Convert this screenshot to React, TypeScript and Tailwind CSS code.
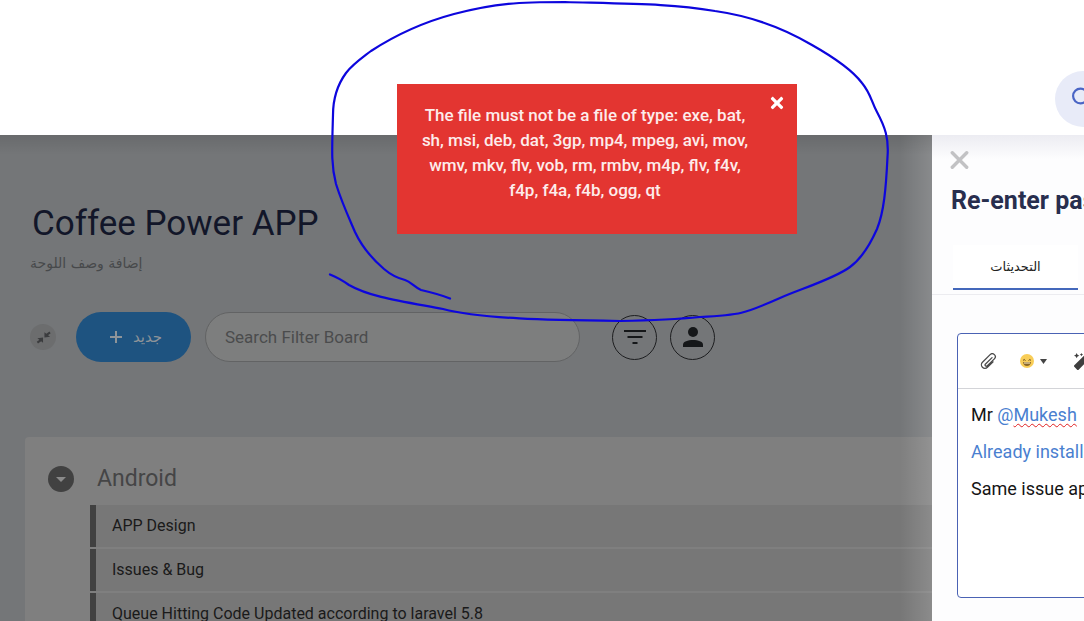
import React from "react";
import { FaMagic, FaTimes } from "react-icons/fa";

const tasks = ["APP Design", "Issues & Bug", "Queue Hitting Code Updated according to laravel 5.8"];

function Header() {
  return (
    <header className="relative z-10 flex h-[135px] shrink-0 items-end justify-end overflow-hidden bg-white pb-2">
      <button type="button" aria-label="Search" className="-mr-[27px] flex h-14 w-14 items-center justify-center rounded-full bg-[#e8ebf8]">
        <svg viewBox="0 0 24 24" className="h-6 w-6" fill="none" stroke="#4a65c5" strokeWidth="2.2">
          <circle cx="9.5" cy="9" r="7.4" />
          <path d="M15 15l7 7" />
        </svg>
      </button>
    </header>
  );
}

function Toolbar() {
  return (
    <div className="mt-[37px] flex items-center pl-[30px]">
      <button type="button" aria-label="Collapse all" className="flex h-[26px] w-[26px] items-center justify-center rounded-full bg-[#6c6d6e]">
        <svg viewBox="0 0 16 16" className="h-[15px] w-[15px]" stroke="#3b3c3e" strokeWidth="2.2" fill="#3b3c3e">
          <path d="M15 2.500l-4 3M1.500 13.500l4-3" />
          <path d="M9 2.500v5.500l6-.8zM7.500 13.500V8l-6 .8z" stroke="none" />
        </svg>
      </button>
      <button type="button" className="ml-5 flex h-[50px] w-[115px] items-center justify-center gap-2.5 rounded-full bg-[#1e5380] pl-1 text-[#8e9499]">
        <svg viewBox="0 0 14 14" className="h-3.5 w-3.5" stroke="currentColor" strokeWidth="2">
          <path d="M7 1v12M1 7h12" />
        </svg>
        <span dir="rtl" lang="ar" className="font-['DejaVu_Sans',sans-serif] text-[15px]">جديد</span>
      </button>
      <input
        type="search"
        aria-label="Search Filter Board"
        placeholder="Search Filter Board"
        className="ml-3.5 h-[50px] w-[375px] rounded-full border border-[#626364] bg-[#7d7e7e] px-[19px] text-[17px] text-[#222] outline-none placeholder:text-[#4b4c4d]"
      />
      <button type="button" aria-label="Filter" className="ml-8 flex h-[45px] w-[45px] items-center justify-center rounded-full border border-[#1d1e20]">
        <svg viewBox="0 0 24 16" className="h-4 w-6" fill="#151719">
          <path d="M1 1h22v2H1zM4.500 7h15v2h-15zM9.500 13h5v2h-5z" />
        </svg>
      </button>
      <button type="button" aria-label="Person" className="ml-[13px] flex h-[45px] w-[45px] items-center justify-center rounded-full border border-[#1d1e20]">
        <svg viewBox="0 0 20 20" className="h-5 w-5" fill="#151719">
          <circle cx="10" cy="5" r="5" />
          <path d="M0 20v-2.500C0 14.500 5 13 10 13s10 1.500 10 4.500V20z" />
        </svg>
      </button>
    </div>
  );
}

function Board() {
  return (
    <main className="relative min-w-0 flex-1 overflow-hidden bg-[#747678]">
      <h1 className="mt-[69px] pl-8 text-[35px] leading-10 text-[#121629]">Coffee Power APP</h1>
      <p dir="rtl" lang="ar" className="mt-[7px] ml-[30px] w-fit font-['DejaVu_Sans',sans-serif] text-sm leading-6 text-[#47494b]">
        إضافة وصف اللوحة
      </p>
      <Toolbar />
      <section className="mt-[75px] ml-[25px] h-full rounded-tl bg-[#7f7f7f] pt-[22px]">
        <div className="flex h-10 items-center gap-[23px] pl-[23px]">
          <button type="button" aria-label="Collapse Android" className="flex h-[26px] w-[26px] items-center justify-center rounded-full bg-[#414141]">
            <svg viewBox="0 0 10 5" className="h-[5px] w-2.5" fill="#8a8a8a">
              <path d="M0 0h10L5 5z" />
            </svg>
          </button>
          <h2 className="text-[23px] text-[#454546]">Android</h2>
        </div>
        <ul className="mt-1.5 ml-[65px] flex flex-col gap-0.5">
          {tasks.map((task) => (
            <li key={task} className="flex h-[42px] items-center border-l-[6px] border-[#414141] bg-[#777777] pl-4 text-base whitespace-nowrap text-[#1a1a1a]">
              {task}
            </li>
          ))}
        </ul>
      </section>
      <div className="pointer-events-none absolute inset-y-0 right-0 w-8 bg-linear-to-r from-white/0 to-white/15" />
      <div className="pointer-events-none absolute inset-x-0 top-0 h-5 bg-linear-to-b from-black/10 to-black/0" />
    </main>
  );
}

function Drawer() {
  return (
    <aside className="flex w-[152px] shrink-0 flex-col overflow-hidden bg-linear-to-b from-[#ececf2] to-[#fdfdfe] to-[24px] whitespace-nowrap">
      <button type="button" aria-label="Close" className="mt-4 ml-[18px] h-[18px] w-[19px]">
        <svg viewBox="0 0 20 20" className="h-full w-full" stroke="#c2c2c4" strokeWidth="3.800" strokeLinecap="round">
          <path d="M2 2l16 16M18 2L2 18" />
        </svg>
      </button>
      <h2 className="mt-4 pl-[19px] text-[25px] leading-8 font-bold text-[#282e4e]">Re-enter password</h2>
      <div className="mt-7 flex border-b border-[#ececf0] pb-1 pl-[21px]">
        <button type="button" dir="rtl" lang="ar" className="h-[45px] w-[125px] shrink-0 border-b-2 border-[#4468bb] bg-white font-['DejaVu_Sans',sans-serif] text-[13px] text-[#222]">
          التحديثات
        </button>
      </div>
      <div className="mt-[38px] ml-[25px] h-[265px] w-[600px] shrink-0 rounded border border-[#4a62b4] bg-white">
        <div className="flex h-[55px] items-center border-b border-[#d3d4d8] pl-[22px]">
          <button type="button" aria-label="Attach file">
            <svg viewBox="0 0 24 24" className="h-[17px] w-[17px]" fill="none" stroke="#4a4a4a" strokeWidth="1.8" strokeLinecap="round" strokeLinejoin="round">
              <path d="M17 6.500l-9.500 9.300a1.800 1.800 0 0 0 2.500 2.500l10.300-10a4.200 4.200 0 0 0-6-6L3.500 13a5 5 0 0 0 7 7.200l8-7.700" />
            </svg>
          </button>
          <button type="button" aria-label="Insert emoji" className="ml-[23px] flex items-center gap-1.5">
            <svg viewBox="0 0 14 14" className="h-3.5 w-3.5">
              <circle cx="7" cy="7" r="7" fill="#f8cd58" />
              <path d="M3 6.500q1-2 2.500 0M8.500 6.500q1.500-2 2.500 0" fill="none" stroke="#6b4d1d" />
              <path d="M3 8h8q-.5 4-4 4T3 8z" fill="#8a6628" />
              <path d="M4 8.500h6v1H4z" fill="#fff2c8" />
            </svg>
            <svg viewBox="0 0 7 5" className="h-[5px] w-[7px]" fill="#444">
              <path d="M0 0h7L3.500 5z" />
            </svg>
          </button>
          <button type="button" aria-label="Format" className="ml-[27px]">
            <FaMagic className="h-[17px] w-[17px] text-[#3e3e3e]" />
          </button>
        </div>
        <div role="textbox" aria-label="Update" aria-multiline="true" contentEditable suppressContentEditableWarning spellCheck={false} className="flex flex-col gap-3 px-[13px] pt-[13px] text-lg leading-[25px] text-[#151515] outline-none">
          <p>
            Mr{" "}
            <a href="#mukesh" className="text-[#4a7fd0]">
              @<span className="underline decoration-[#e02020] decoration-wavy decoration-1 underline-offset-2">Mukesh</span>
            </a>
          </p>
          <p className="text-[#4a7fd0]">Already install</p>
          <p>Same issue appears</p>
        </div>
      </div>
    </aside>
  );
}

function Toast() {
  return (
    <div role="alert" className="absolute top-[84px] left-[397px] z-20 min-h-[150px] w-[400px] bg-[#e33531] pt-[19px] pr-10 pl-4 text-center text-[17px] leading-[25px] font-medium text-[#fdeceb]">
      The file must not be a file of type: exe, bat,
      <br />
      sh, msi, deb, dat, 3gp, mp4, mpeg, avi, mov,
      <br />
      wmv, mkv, flv, vob, rm, rmbv, m4p, flv, f4v,
      <br />
      f4p, f4a, f4b, ogg, qt
      <button type="button" aria-label="Dismiss" className="absolute top-2.5 right-3">
        <FaTimes className="h-[18px] w-4 text-white" />
      </button>
    </div>
  );
}

function PenStroke() {
  return (
    <svg viewBox="0 0 1084 621" className="pointer-events-none absolute top-0 left-0 z-30 h-[621px] w-[1084px]" fill="none" stroke="#0d06dd" strokeWidth="2.2" strokeLinecap="round" strokeLinejoin="round">
      <path d="M450 298.500C444 296 434 293 421 290C414 287 411 282 405 280C397 278 391 275 384 269C370 257 362 247 355 232C349 218 342 203 336 184C331 165 332 150 333 115C333 99 338 84 346 73C353 64 362 58 371 51C394 36 424 22 454 14C496 3 520 2 565 2C640 4 673 4 715 11C750 16 780 26 812 45C835 58 853 71 862 83C871 94 871 101 877 112C885 127 889 138 887.500 157C886 188 884 212 877 229C869 247 861 259 850 267C834 279 800 289 780 298C744 314 740 315 700 317C670 320 645 320.500 620 321C550 320 480 319 443 309C400 301 370 297 349 285Q339 278 330 274.500" />
    </svg>
  );
}

export default function App() {
  return (
    <div className="relative flex h-screen flex-col overflow-hidden bg-white font-[Roboto,'DejaVu_Sans',sans-serif]">
      <Header />
      <div className="flex min-h-0 flex-1">
        <Board />
        <Drawer />
      </div>
      <Toast />
      <PenStroke />
    </div>
  );
}
